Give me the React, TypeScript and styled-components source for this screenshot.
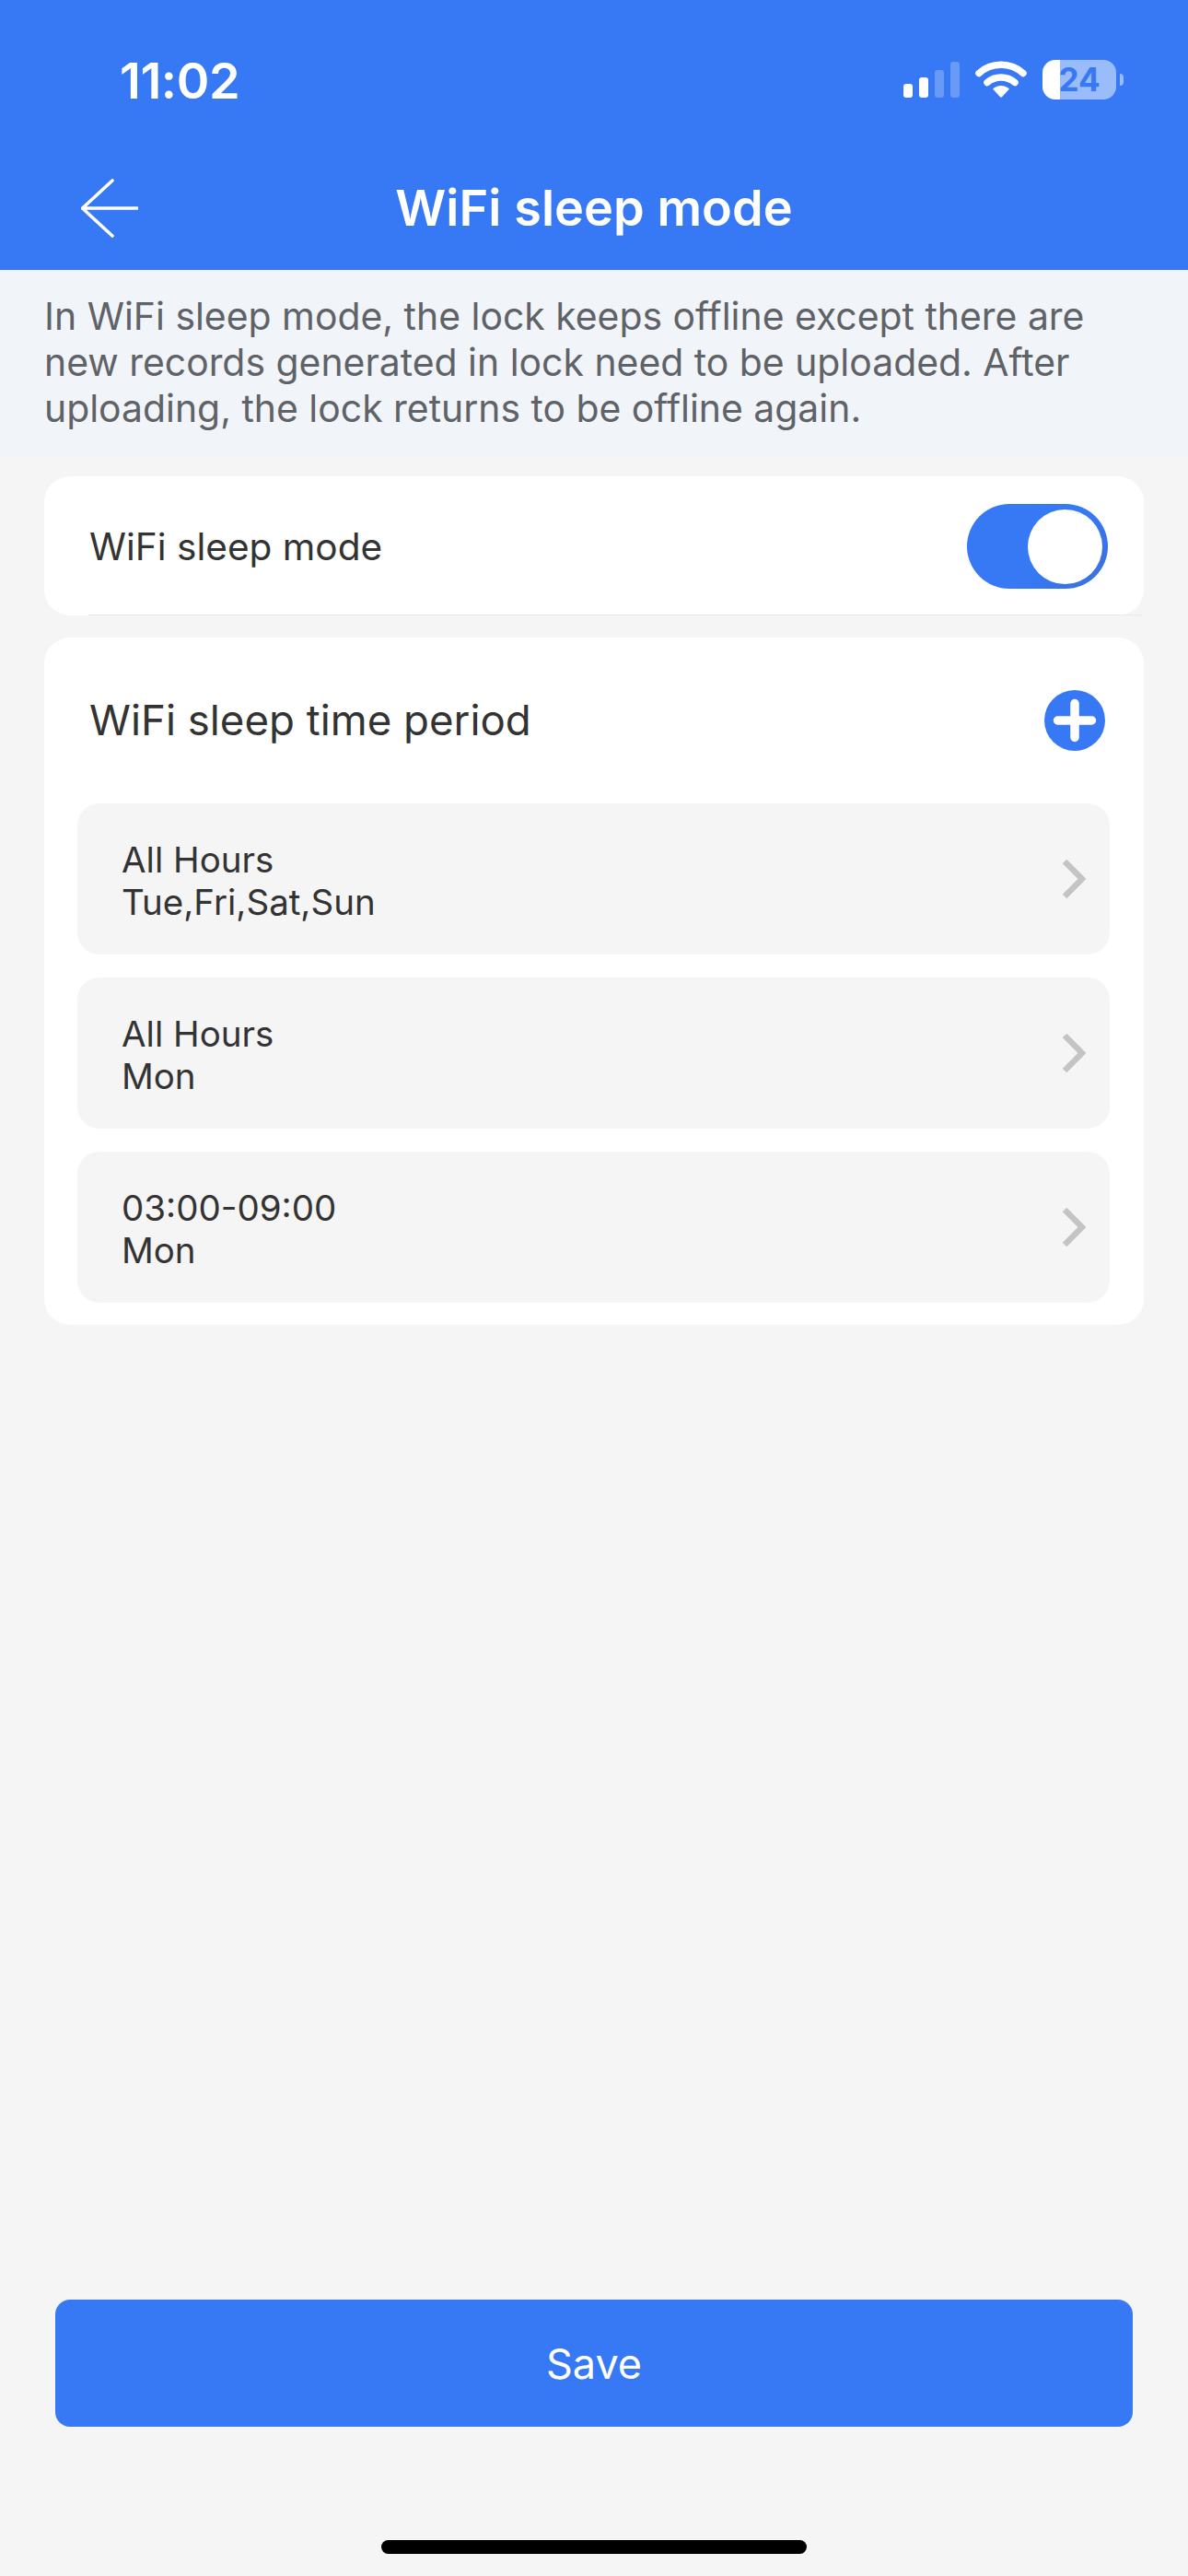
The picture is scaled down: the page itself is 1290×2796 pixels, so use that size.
import React from "react";
import styled, { createGlobalStyle } from "styled-components";

const Global = createGlobalStyle`
  html, body { margin: 0; padding: 0; background: #f5f5f5; }
  * { box-sizing: border-box; }
`;

const Page = styled.div`
  width: 1290px;
  height: 2796px;
  display: flex;
  flex-direction: column;
  background: #f5f5f5;
  font-family: Inter, "Noto Sans", sans-serif;
  color: #333;
  overflow: hidden;
`;

const Header = styled.header`
  height: 293px;
  background: #3778f5;
  color: #fff;
  display: flex;
  flex-direction: column;
`;

const StatusBar = styled.div`
  height: 173px;
  padding: 62px 78px 0 130px;
  display: flex;
  justify-content: space-between;
  align-items: flex-start;
`;

const Clock = styled.div`
  font-size: 54px;
  line-height: 52px;
  font-weight: 600;
  letter-spacing: -0.4px;
`;

const StatusIcons = styled.div`
  display: flex;
  align-items: flex-start;
  margin-top: 3px;
`;

const WifiIcon = styled.svg`
  display: block;
  margin-left: 17px;
`;

const Battery = styled.div`
  width: 80px;
  height: 43px;
  margin-left: 17px;
  border-radius: 14px;
  background: linear-gradient(90deg, #fff 24%, rgba(255, 255, 255, 0.5) 24%);
  color: #3778f5;
  font-size: 35px;
  font-weight: 700;
  line-height: 43px;
  text-align: center;
  position: relative;
  &::after {
    content: "";
    position: absolute;
    left: 84px;
    top: 15px;
    width: 4px;
    height: 13px;
    border-radius: 0 7px 7px 0;
    background: rgba(255, 255, 255, 0.5);
  }
`;

const NavBar = styled.div`
  height: 120px;
  padding: 0 0 0 88px;
  display: grid;
  grid-template-columns: 62px 1fr 150px;
  align-items: flex-start;
`;

const BackIcon = styled.svg`
  display: block;
  margin-top: 21px;
`;

const Title = styled.h1`
  margin: 0;
  padding-top: 21px;
  font-size: 54px;
  line-height: 64px;
  font-weight: 600;
  text-align: center;
  letter-spacing: 0.05px;
`;

const Description = styled.p`
  margin: 0;
  padding: 25px 40px 27px 48px;
  height: 204px;
  background: #f1f5f9;
  color: #5f6368;
  font-size: 40.9px;
  line-height: 50px;
`;

const Content = styled.main`
  flex: 1;
  padding: 20px 48px 0;
  display: flex;
  flex-direction: column;
  gap: 24px;
`;

const ToggleCard = styled.section`
  height: 151px;
  background: #fff;
  border-radius: 28px;
  padding: 0 39px 0 49px;
  display: flex;
  align-items: center;
  justify-content: space-between;
  position: relative;
  &::after {
    content: "";
    position: absolute;
    left: 48px;
    right: 2px;
    bottom: 0;
    height: 1px;
    background: #e8e8e8;
  }
`;

const ToggleLabel = styled.span`
  font-size: 40.6px;
  padding-top: 2px;
  color: #333;
`;

const Switch = styled.div`
  width: 153px;
  height: 92px;
  border-radius: 46px;
  background: linear-gradient(135deg, #3778f5 60%, #3a6fd8);
  padding: 6px;
  display: flex;
  justify-content: flex-end;
`;

const Knob = styled.div`
  width: 81px;
  height: 81px;
  border-radius: 50%;
  background: #fff;
`;

const PeriodCard = styled.section`
  height: 746px;
  background: #fff;
  border-radius: 28px;
  padding: 0 37px 0 36px;
`;

const PeriodHead = styled.div`
  height: 180px;
  padding: 0 5px 0 13px;
  display: flex;
  align-items: center;
  justify-content: space-between;
`;

const PeriodTitle = styled.span`
  font-size: 45.6px;
  margin-top: -2px;
  color: #333;
`;

const PlusIcon = styled.svg`
  display: block;
  margin-top: -1px;
`;

const Rows = styled.div`
  display: flex;
  flex-direction: column;
  gap: 25px;
`;

const Row = styled.div`
  height: 164px;
  border-radius: 24px;
  background: #f5f5f5;
  padding: 0 26px 0 48px;
  display: flex;
  align-items: center;
  justify-content: space-between;
`;

const RowText = styled.div`
  font-size: 38.5px;
  line-height: 46px;
  padding-top: 3px;
  color: #333;
`;

const Footer = styled.footer`
  padding: 0 60px;
  display: flex;
  flex-direction: column;
  align-items: center;
`;

const SaveButton = styled.button`
  width: 100%;
  height: 138px;
  border: 0;
  border-radius: 16px;
  background: #3778f5;
  color: #fff;
  font-family: inherit;
  font-size: 45px;
`;

const HomeBar = styled.div`
  width: 462px;
  height: 15px;
  margin: 123px 0 24px;
  border-radius: 8px;
  background: #000;
`;

const rows = [
  ["All Hours", "Tue,Fri,Sat,Sun"],
  ["All Hours", "Mon"],
  ["03:00-09:00", "Mon"],
];

export default function App() {
  return (
    <Page>
      <Global />
      <Header>
        <StatusBar>
          <Clock>11:02</Clock>
          <StatusIcons>
            <svg width="62" height="42" viewBox="0 0 62 42">
              <rect x="1" y="26" width="10" height="15" rx="3" fill="#fff" />
              <rect x="18" y="19" width="10" height="22" rx="3" fill="#fff" />
              <rect x="35" y="11" width="10" height="30" rx="3" fill="#fff" fillOpacity=".25" />
              <rect x="52" y="2" width="10" height="39" rx="3" fill="#fff" fillOpacity=".25" />
            </svg>
            <WifiIcon width="56" height="42" viewBox="0 0 56 42" fill="none">
              <path d="M4 14.5A36 36 0 0 1 52 14.5" stroke="#fff" strokeWidth="7.5" strokeLinecap="round" />
              <path d="M13 24.5A23 23 0 0 1 43 24.5" stroke="#fff" strokeWidth="7.5" strokeLinecap="round" />
              <path d="M19 31.5A13 13 0 0 1 37 31.5L29.2 40C28.5 40.7 27.5 40.7 26.8 40Z" fill="#fff" />
            </WifiIcon>
            <Battery>24</Battery>
          </StatusIcons>
        </StatusBar>
        <NavBar>
          <BackIcon width="62" height="64" viewBox="0 0 62 64" fill="none">
            <path d="M34 2L1.5 32L34 62M1.5 32H61" stroke="#fff" strokeWidth="3.6" strokeLinecap="round" strokeLinejoin="round" />
          </BackIcon>
          <Title>WiFi sleep mode</Title>
        </NavBar>
      </Header>
      <Description>
        In WiFi sleep mode, the lock keeps offline except there are new records generated in lock need to be uploaded. After uploading, the lock returns to be offline again.
      </Description>
      <Content>
        <ToggleCard>
          <ToggleLabel>WiFi sleep mode</ToggleLabel>
          <Switch>
            <Knob />
          </Switch>
        </ToggleCard>
        <PeriodCard>
          <PeriodHead>
            <PeriodTitle>WiFi sleep time period</PeriodTitle>
            <PlusIcon width="66" height="66" viewBox="0 0 66 66">
              <circle cx="33" cy="33" r="33" fill="#3778f5" />
              <path d="M33 14.5V51.5M14.5 33H51.5" stroke="#fff" strokeWidth="9.5" strokeLinecap="round" />
            </PlusIcon>
          </PeriodHead>
          <Rows>
            {rows.map(([a, b], i) => (
              <Row key={i}>
                <RowText>
                  {a}
                  <br />
                  {b}
                </RowText>
                <svg width="26" height="44" viewBox="0 0 26 44" fill="none">
                  <path d="M3 3L22 22L3 41" stroke="#c4c4c4" strokeWidth="6.5" />
                </svg>
              </Row>
            ))}
          </Rows>
        </PeriodCard>
      </Content>
      <Footer>
        <SaveButton>Save</SaveButton>
        <HomeBar />
      </Footer>
    </Page>
  );
}
